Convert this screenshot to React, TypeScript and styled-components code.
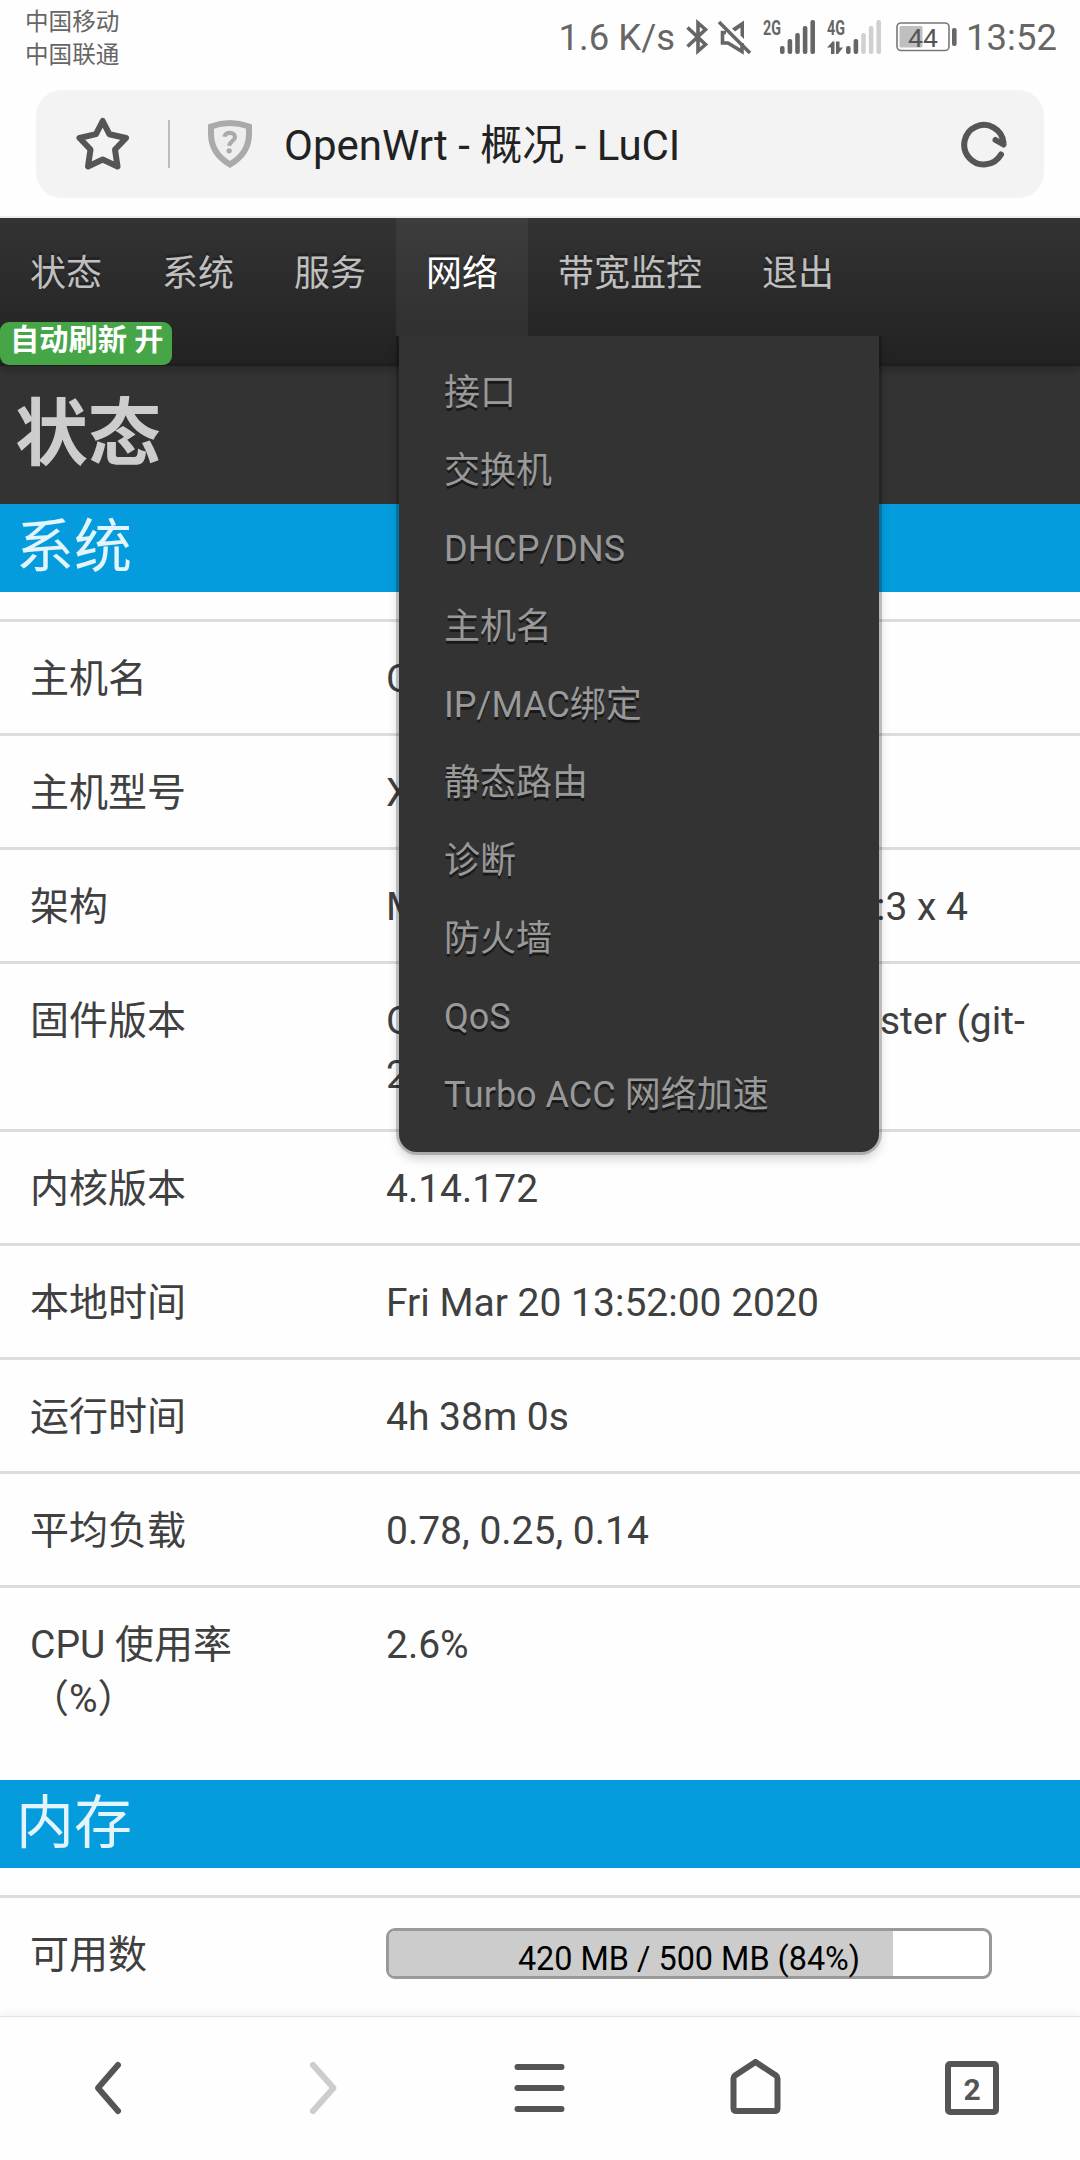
import React from "react";
import styled, { createGlobalStyle } from "styled-components";

const GlobalStyle = createGlobalStyle`
  * { box-sizing: border-box; }
  body {
    margin: 0;
    background: #fff;
    font-family: Roboto, "Noto Sans CJK SC", sans-serif;
  }
`;

const Phone = styled.div`
  width: 1080px;
  height: 2160px;
  display: flex;
  flex-direction: column;
  overflow: hidden;
  background: #fefefe;
`;

/* ---------- system status bar ---------- */

const StatusBar = styled.header`
  height: 90px;
  flex: none;
  display: flex;
  justify-content: space-between;
  padding: 5px 23px 0 25px;
  color: #666;
`;

const Carriers = styled.div`
  padding-top: 1px;
  font-size: 23.6px;
  line-height: 33px;
`;

const StatusIcons = styled.div`
  display: flex;
  align-items: center;
  height: 64px;
`;

const StatusText = styled.span`
  font-size: 36.5px;
  line-height: 44px;
  padding-top: 2px;
`;

const StatusGlyph = styled.svg<{ $gap: number }>`
  display: block;
  flex: none;
  overflow: visible;
  margin-right: ${(p) => p.$gap}px;
`;

const Speed = styled(StatusText)`
  margin-right: 11px;
`;

/* ---------- address bar ---------- */

const AddressArea = styled.div`
  height: 128px;
  flex: none;
  padding: 0 36px;
  border-bottom: 2px solid #eee;
`;

const AddressBar = styled.div`
  height: 108px;
  border-radius: 26px;
  background: #f3f3f3;
  display: flex;
  align-items: center;
  padding: 0 36px 0 39px;
`;

const Divider = styled.span`
  width: 2px;
  height: 48px;
  margin: 0 37px 0 37px;
  background: #bdbdbd;
`;

const PageTitle = styled.span`
  flex: 1;
  margin-left: 31px;
  padding-top: 3px;
  font-size: 42px;
  line-height: 50px;
  color: #222;
`;

/* ---------- web page ---------- */

const WebView = styled.main`
  flex: 1;
  min-height: 0;
  overflow: hidden;
  color: #404040;
`;

const Nav = styled.nav`
  position: relative;
  z-index: 2;
  height: 148px;
  display: flex;
  align-items: flex-start;
  background: linear-gradient(#333, #222);
  box-shadow: 0 3px 9px rgba(0, 0, 0, 0.25), inset 0 -3px 0 rgba(0, 0, 0, 0.1);
`;

const NavItem = styled.div<{ $active?: boolean }>`
  position: relative;
  height: 118px;
  padding: 29px 30px 0;
  font-size: 36px;
  line-height: 54px;
  white-space: nowrap;
  color: ${(p) => (p.$active ? "#fff" : "#bfbfbf")};
  background: ${(p) => (p.$active ? "rgba(255, 255, 255, 0.05)" : "none")};
  text-shadow: 0 -3px 0 rgba(0, 0, 0, 0.25);
`;

const RefreshBadge = styled.span`
  position: absolute;
  left: 0;
  bottom: 1px;
  height: 43px;
  padding: 0 8px 0 10px;
  border-radius: 9px;
  background: #46a546;
  color: #fff;
  font-size: 29.25px;
  font-weight: 700;
  line-height: 36px;
  white-space: nowrap;
`;

const Dropdown = styled.ul`
  position: absolute;
  top: 118px;
  left: 3px;
  width: 480px;
  margin: 0;
  padding: 18px 0;
  list-style: none;
  background: #333;
  border-radius: 0 0 18px 18px;
  box-shadow: 0 0 0 3px rgba(0, 0, 0, 0.2), 0 6px 12px rgba(0, 0, 0, 0.2);
  clip-path: inset(0 -40px -40px -40px);
`;

const DropdownItem = styled.li`
  padding: 12px 45px;
  font-size: 36px;
  line-height: 54px;
  color: #999;
  text-shadow: 0 3px 0 rgba(0, 0, 0, 0.5);
`;

const PageHeading = styled.h2`
  margin: 0;
  height: 138px;
  padding: 14px 15px 0;
  background: #333;
  color: #cdcdcd;
  font-size: 73px;
  font-weight: 700;
  line-height: 108px;
`;

const SectionHeading = styled.h3`
  margin: 0 0 27px;
  height: 88px;
  padding: 0 16px;
  background: #049cdc;
  color: #e3f4fc;
  font-size: 58px;
  font-weight: 400;
  line-height: 86px;
`;

const Row = styled.div<{ $last?: boolean }>`
  display: flex;
  min-height: 114px;
  padding: 30px 0 27px 30px;
  margin-bottom: ${(p) => (p.$last ? 27 : 0)}px;
  border-top: 3px solid #dcdcdc;
  font-size: 39px;
  line-height: 54px;
`;

const Label = styled.div`
  width: 356px;
  flex: none;
  padding-right: 110px;
`;

const Value = styled.div`
  white-space: pre;
`;

const Meter = styled.div`
  width: 606px;
  height: 51px;
  border: 3px solid #999;
  border-radius: 9px;
  background: #fff;
`;

const MeterFill = styled.div`
  height: 45px;
  border-radius: 5px 0 0 5px;
  background: #ccc;
`;

const MeterText = styled.div`
  width: 600px;
  text-align: center;
  font-size: 32.4px;
  line-height: 56px;
  color: #000;
  white-space: nowrap;
`;

/* ---------- browser toolbar ---------- */

const Toolbar = styled.footer`
  position: relative;
  z-index: 3;
  flex: none;
  height: 144px;
  display: grid;
  grid-template-columns: repeat(5, 1fr);
  place-items: center;
  padding-bottom: 2px;
  background: #fefefe;
  border-top: 1px solid #e4e4e4;
  box-shadow: 0 -3px 10px rgba(0, 0, 0, 0.05);
`;

const TabCount = styled.span`
  width: 54px;
  height: 54px;
  border: 6px solid #555;
  border-radius: 5px;
  text-align: center;
  font-size: 30px;
  font-weight: 700;
  line-height: 45px;
  color: #555;
`;

const ToolIcon = styled.svg<{ $disabled?: boolean }>`
  display: block;
  fill: none;
  stroke: ${(p) => (p.$disabled ? "#ccc" : "#555")};
  stroke-width: 6;
`;

const BAR_TOPS = [26, 19, 13, 6, 0];

function SignalBars({ x, active }: { x: number; active: number }) {
  return (
    <>
      {BAR_TOPS.map((top, i) => (
        <rect key={top} x={x + i * 7.6} y={top} width="4.6" height={34 - top} rx="2"
          fill={i < active ? "#666" : "#d0d0d0"} />
      ))}
    </>
  );
}

function NetworkLabel({ children }: { children: string }) {
  return (
    <text x="0" y="15" fill="#666" fontSize="20" fontWeight="700"
      textLength="18" lengthAdjust="spacingAndGlyphs">{children}</text>
  );
}

const MENU = ["接口", "交换机", "DHCP/DNS", "主机名", "IP/MAC绑定", "静态路由", "诊断", "防火墙", "QoS", "Turbo ACC 网络加速"];

const INFO: [string, string][] = [
  ["主机名", "OpenWrt"],
  ["主机型号", "Xiaomi Mi Router 3G"],
  ["架构", "MediaTek MT7621 ver:1 eco:3 x 4"],
  ["固件版本", "OpenWrt R20.3.19 / LuCI Master (git-\n20.074.84698-ead5e81)"],
  ["内核版本", "4.14.172"],
  ["本地时间", "Fri Mar 20 13:52:00 2020"],
  ["运行时间", "4h 38m 0s"],
  ["平均负载", "0.78, 0.25, 0.14"],
  ["CPU 使用率（%）", "2.6%"],
];

const memory = { used: 420, total: 500 };
const memoryPercent = Math.round((memory.used / memory.total) * 100);

export default function App() {
  return (
    <Phone>
      <GlobalStyle />
      <StatusBar>
        <Carriers>
          <div>中国移动</div>
          <div>中国联通</div>
        </Carriers>
        <StatusIcons>
          <Speed>1.6 K/s</Speed>
          <StatusGlyph $gap={10} width="22" height="36" viewBox="0 0 22 36">
            <path d="M1.500 8.500 L19.500 25.500 L12 32 V4 L19.500 10.500 L1.500 27.500" fill="none" stroke="#666" strokeWidth="3.600" />
          </StatusGlyph>
          <StatusGlyph $gap={11} width="34" height="36" viewBox="0 0 34 36">
            <path d="M8 13.500 H4.500 V24 H10 L24 32.500 V24" fill="none" stroke="#666" strokeWidth="3.600" />
            <path d="M14 9.500 L26 1.500 V20 L22.500 16.500 V8.500 L17 12.500Z" fill="#666" />
            <path d="M1 3 L32 34" stroke="#666" strokeWidth="3.600" />
          </StatusGlyph>
          <StatusGlyph $gap={12} width="52" height="34" viewBox="0 0 52 34">
            <NetworkLabel>2G</NetworkLabel>
            <SignalBars x={17} active={5} />
          </StatusGlyph>
          <StatusGlyph $gap={15} width="54" height="34" viewBox="0 0 54 34">
            <NetworkLabel>4G</NetworkLabel>
            <path d="M0 27.500 L5.500 21.500 H7.500 V34 H4 V27.500Z M9 21.500 H12.500 V27.500 H16 L11 34 H9Z" fill="#666" />
            <SignalBars x={19} active={2} />
          </StatusGlyph>
          <StatusGlyph $gap={9} width="61" height="30" viewBox="0 0 61 30">
            <rect x="1" y="1" width="52" height="27.500" rx="4" fill="none" stroke="#777" strokeWidth="1.600" />
            <rect x="3.500" y="4" width="23" height="21.500" rx="1.500" fill="#bfbfbf" />
            <text x="27" y="24.500" textAnchor="middle" fontSize="26.500" fill="#555">44</text>
            <rect x="56" y="6" width="4.600" height="18" rx="2" fill="#666" />
          </StatusGlyph>
          <StatusText>13:52</StatusText>
        </StatusIcons>
      </StatusBar>

      <AddressArea>
        <AddressBar>
          <ToolIcon width="56" height="56" viewBox="0 0 56 56" strokeLinejoin="round">
            <path d="M27.700 5 L34.300 18.200 L51 22 L40 33.500 L42.500 50.500 L27.700 43.500 L13 50.500 L15.500 33.500 L4.500 22 L21 18.200Z" />
          </ToolIcon>
          <Divider />
          <svg width="46" height="50" viewBox="0 0 46 50">
            <path d="M4 7.500 Q23 0.500 42 7.500 V15 C42 29 34 39 23 45.500 C12 39 4 29 4 15Z" fill="#eee" stroke="#aaa" strokeWidth="6" />
            <path d="M17.500 17.800 C18 12.500 28 12.500 28 18 C28 21.500 22.500 22.500 22.200 26.800" fill="none" stroke="#aaa" strokeWidth="4.200" />
            <circle cx="22.200" cy="31.800" r="2.600" fill="#aaa" />
          </svg>
          <PageTitle>OpenWrt - 概况 - LuCI</PageTitle>
          <ToolIcon width="48" height="48" viewBox="0 0 48 48" strokeLinecap="round" strokeLinejoin="round">
            <path d="M41 34.500 A19.700 19.700 0 1 1 43.500 22.500 M43.500 24.500 L35.500 20" />
          </ToolIcon>
        </AddressBar>
      </AddressArea>

      <WebView>
        <Nav>
          <NavItem>状态</NavItem>
          <NavItem>系统</NavItem>
          <NavItem>服务</NavItem>
          <NavItem $active>
            网络
            <Dropdown>
              {MENU.map((item) => <DropdownItem key={item}>{item}</DropdownItem>)}
            </Dropdown>
          </NavItem>
          <NavItem>带宽监控</NavItem>
          <NavItem>退出</NavItem>
          <RefreshBadge>自动刷新 开</RefreshBadge>
        </Nav>
        <PageHeading>状态</PageHeading>
        <SectionHeading>系统</SectionHeading>
        {INFO.map(([label, value], i) => (
          <Row key={label} $last={i === INFO.length - 1}>
            <Label>{label}</Label>
            <Value>{value}</Value>
          </Row>
        ))}
        <SectionHeading>内存</SectionHeading>
        <Row>
          <Label>可用数</Label>
          <Meter>
            <MeterFill style={{ width: `${memoryPercent}%` }}>
              <MeterText>{memory.used} MB / {memory.total} MB ({memoryPercent}%)</MeterText>
            </MeterFill>
          </Meter>
        </Row>
      </WebView>

      <Toolbar>
        <ToolIcon width="32" height="56" viewBox="0.500 0 32 56" strokeLinecap="round" strokeLinejoin="round">
          <path d="M26.500 5 L6.500 28 L26.500 51" />
        </ToolIcon>
        <ToolIcon $disabled width="32" height="56" viewBox="0 0 32 56" strokeLinecap="round" strokeLinejoin="round">
          <path d="M5 5 L25.500 28 L5 51" />
        </ToolIcon>
        <ToolIcon width="52" height="56" viewBox="0.500 0 52 56" strokeLinecap="round">
          <path d="M4 7 H48 M4 28 H48 M4 49 H48" />
        </ToolIcon>
        <ToolIcon width="52" height="58" viewBox="0.500 2 52 58">
          <path d="M26 5 L46.500 18.500 Q48 19.500 48 21.500 V51 Q48 54 45 54 H7 Q4 54 4 51 V21.500 Q4 19.500 5.500 18.500Z" />
        </ToolIcon>
        <TabCount>2</TabCount>
      </Toolbar>
    </Phone>
  );
}
